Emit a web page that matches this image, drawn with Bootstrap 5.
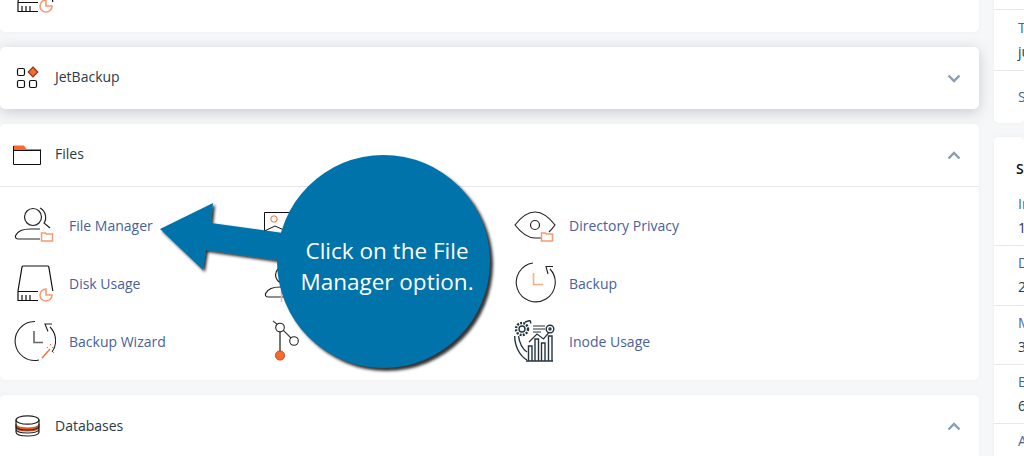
<!DOCTYPE html>
<html lang="en"><head><meta charset="utf-8">
<link href="https://cdn.jsdelivr.net/npm/bootstrap@5.3.0/dist/css/bootstrap.min.css" rel="stylesheet">
<style>
html,body{height:456px;overflow:hidden}
body{background:#f6f7f8;font-family:"Open Sans","Noto Sans",sans-serif;font-size:14px;color:#293a4a;position:relative}
.stage{display:flex;gap:15px;height:456px;overflow:hidden}
.maincol{width:979px;flex:none;display:flex;flex-direction:column;gap:15px;margin-top:-60px}
.sidecol{flex:1;display:flex;flex-direction:column;gap:14px;margin-top:-113px;min-width:0}
.panel{background:#fff;border-radius:5px;flex:none;box-shadow:0 0 4px rgba(60,70,90,.05)}
.panel.lifted{box-shadow:0 3px 14px rgba(60,70,90,.25)}
.ph{height:62px;display:flex;align-items:center;padding:0 18px 4px 15px;color:#293a4a}
.ph span{margin-left:14px;flex:1}
.ph svg.ico{width:26px;height:26px;flex:none;margin-top:2px}
.ph.bordered{height:63px;border-bottom:1px solid #e6e8f3}
.ph svg.fold{width:28px;height:20px;flex:none;margin:4px 0 0 -2px}
.ph.last{height:80px;padding-bottom:20px}
.ph.last svg.ico{margin-top:0}
.chev{width:14px;height:9px;flex:none;margin-top:4px}
.ph.last .chev{margin-top:2px}
.tools{display:grid;grid-template-columns:250px 250px 1fr;padding:9px 0 0 14px;height:193px;grid-auto-rows:58px;align-content:start}
.tool{display:flex;align-items:center;color:#4a5f9c;text-decoration:none;height:58px}
.tool svg{width:42px;height:42px;flex:none;margin-right:13px}
.top{height:92px}
.top svg{display:block;width:42px;height:42px;margin:33px 0 0 14px}
.srow{height:59.3px;border-bottom:1px solid #e8e8e8;padding:5px 0 0 24px;line-height:24px;white-space:nowrap;overflow:hidden}
.srow:last-child{border-bottom:0}
.srow.blank{height:123px;padding:0}
.srow.theme{height:61px;padding-top:6px}
.srow.srv{height:52px;border:0;padding-top:14px}
.srow.stt{height:50px;border:0;padding:20px 0 0 22px;font-weight:600;color:#111}
.lnk{color:#4a5f9c}
.callout{position:absolute;left:0;top:0;width:1024px;height:456px;pointer-events:none}
.callout svg{position:absolute;left:0;top:0}
.bubble{position:absolute;left:277px;top:155px;width:213px;height:213px;border-radius:50%;background:#0073aa;color:#fff;font-size:22.5px;line-height:31px;text-align:center;display:flex;align-items:center;justify-content:center;box-shadow:3px 3px 3px rgba(0,0,0,.8);padding:9px 0 0 7px}
</style></head><body>
<svg class="d-none"><symbol id="disk" viewBox="0 0 42 42"><path d="M4 29L8 5q.3-1 1.500-1h24q1 0 1.300 1l4 24M24 29.500H4v9h20M8 33v5M12 33v5M16 33v5" fill="none" stroke="#111" stroke-width="1.200"/><path d="M32 27a6 6 0 1 0 6 6h-6z" fill="none" stroke="#f79a72" stroke-width="1.600"/></symbol></svg>
<div class="stage">
<div class="maincol">
<div class="panel top"><svg viewBox="0 0 42 42"><use href="#disk"/></svg></div>
<div class="panel lifted ph"><svg class="ico" viewBox="0 0 26 26" fill="none" stroke="#111" stroke-width="1.200"><rect x="2.500" y="4.500" width="7" height="7" rx="1.500"/><rect x="2.500" y="16.500" width="7" height="7" rx="1.500"/><rect x="14.500" y="16.500" width="7" height="7" rx="1.500"/><path d="M18 3l4.800 5-4.800 5-4.800-5z" fill="#f96a2d" stroke="#8a3a18"/></svg><span>JetBackup</span><svg class="chev" viewBox="0 0 14 9" fill="none" stroke="#8a9db5" stroke-width="2.400"><path d="M1.500 1.500L7 7l5.500-5.500"/></svg></div>
<div class="panel">
<div class="ph bordered"><svg class="fold" viewBox="0 0 28 20" fill="none"><path d="M.500 5.500V.500h10.500l2.500 3.500h14v1.500z" fill="#f96a2d"/><path d="M.500 1v18.500h27V4.500M.500 5.500h27" stroke="#111"/></svg><span>Files</span><svg class="chev" viewBox="0 0 14 9" fill="none" stroke="#8a9db5" stroke-width="2.400"><path d="M1.500 7.500L7 2l5.500 5.500"/></svg></div>
<div class="tools">
<a class="tool"><svg viewBox="0 0 42 42" fill="none" stroke="#222" stroke-width="1.200"><circle cx="19" cy="13" r="8.500"/><path d="M26 4c6 3 7 11 4 15l6 5M26 35H4c-3 0-3-3-2-4 2-4 8-6 14-6h10"/><path d="M27.500 37v-8h4l1 1h6v7z" stroke="#f79a72" stroke-width="1.500"/></svg>File Manager</a>
<a class="tool"><svg viewBox="0 0 42 42" fill="none"><path d="M.500 27V8.500h34" stroke="#111"/><circle cx="10" cy="15" r="3.200" stroke="#f96a2d"/><path d="M.500 27L11 22l11 5" stroke="#111"/></svg></a>
<a class="tool"><svg viewBox="0 0 42 42" fill="none" stroke="#222" stroke-width="1.200"><path d="M27 34h-6C14 34 8 30 1 21 8 12 14 8 21 8s13 4 20 13c-2 3-4 5-6 7"/><circle cx="21" cy="21" r="4.500"/><path d="M27.500 37v-8h4l1 1h6v7z" stroke="#f79a72" stroke-width="1.500"/></svg>Directory Privacy</a>
<a class="tool"><svg viewBox="0 0 42 42"><use href="#disk"/></svg>Disk Usage</a>
<a class="tool"><svg viewBox="0 0 42 42" fill="none"><circle cx="20" cy="13" r="8.500" stroke="#222" stroke-width="1.200"/><path d="M26 35H4c-3 0-3-3-2-4 2-4 8-6 14-6h10" stroke="#222" stroke-width="1.200"/><path d="M17.500 28v12" stroke="#fbb596" stroke-width="1.500"/></svg></a>
<a class="tool"><svg viewBox="0 0 42 42" fill="none" stroke="#222" stroke-width="1.100"><path d="M19 1A19.500 19.500 0 1 0 36 7M39 4.500H32l2 7.500"/><path d="M19.500 11v11.500H29" stroke="#fbab88" stroke-width="1.600"/></svg>Backup</a>
<a class="tool"><svg viewBox="0 0 42 42" fill="none" stroke="#222" stroke-width="1.100"><path d="M21 1.500A19.500 19.500 0 1 0 25 40M38 4h-7l3 7.500M36 7a19.500 19.500 0 0 1 2 25"/><path d="M20 11v11.500h9" stroke="#666" stroke-width="1.600"/><path d="M28 38l8-9" stroke="#f96a2d" stroke-width="1.300"/><path d="M33 27l1 1M38 27l1 1M39 32l1 1M36 24l1 1" stroke="#f96a2d" stroke-width="1"/></svg>Backup Wizard</a>
<a class="tool"><svg viewBox="0 0 42 42" fill="none"><path d="M16 9v24" stroke="#666" stroke-width="1.800"/><path d="M19 10l8 8M9 1l5 4" stroke="#444" stroke-width="1.100"/><circle cx="16" cy="7.500" r="4.300" fill="#fff" stroke="#222" stroke-width="1.100"/><circle cx="30" cy="21" r="4.300" fill="#fff" stroke="#222" stroke-width="1.100"/><circle cx="16" cy="35.500" r="4.600" fill="#f96a2d" stroke="#c34a18"/></svg></a>
<a class="tool"><svg viewBox="0 0 42 42" fill="none" stroke="#25343f" stroke-width="1.400"><circle cx="8" cy="9" r="6" stroke-width="2.400" stroke-dasharray="2 1.200"/><circle cx="8" cy="9" r="3"/><path d="M.700 16c0 10 5 20 12.300 24M4.500 16c1 7 4 13 8.500 16M11 2l5-1.500 1 3"/><path d="M19 6h12M19 9h12M19 12h8" stroke-width="1.100"/><circle cx="36" cy="9" r="3.800"/><circle cx="36" cy="9" r="1"/><path d="M14.500 41V26h3.500v15zM21 41V19h3.500v22zM27.500 41V23h3.500v18zM34.500 41V16H38v25zM12 41h27"/><path d="M15 22l8-8 6.500 5 5-6" stroke-width="1.200"/></svg>Inode Usage</a>
</div></div>
<div class="panel ph last"><svg class="ico" viewBox="0 0 26 26" fill="none" stroke="#222" stroke-width="1.200"><path d="M1 12v3c0 2.500 5 4 11.500 4S24 17.500 24 15v-3c0 2.500-5 4-11.500 4S1 14.500 1 12z" fill="#f96a2d" stroke="#c34a18"/><ellipse cx="12.500" cy="8" rx="11.500" ry="4.200"/><path d="M1 8v12c0 2.500 5 4 11.500 4S24 22.500 24 20V8M1 14c0 2.500 5 4 11.500 4S24 16.500 24 14M1 17c0 2.500 5 4 11.500 4S24 19.500 24 17"/></svg><span>Databases</span><svg class="chev" viewBox="0 0 14 9" fill="none" stroke="#8a9db5" stroke-width="2.400"><path d="M1.500 7.500L7 2l5.500 5.500"/></svg></div>
</div>
<div class="sidecol">
<div class="panel">
<div class="srow blank"></div>
<div class="srow theme"><span class="lnk">Theme</span><br>jupiter</div>
<div class="srow srv lnk">Server</div>
</div>
<div class="panel">
<div class="srow stt">Statistics</div>
<div class="srow"><span class="lnk">Inodes</span><br>12</div>
<div class="srow"><span class="lnk">Disk</span><br>2</div>
<div class="srow"><span class="lnk">MySQL</span><br>3</div>
<div class="srow"><span class="lnk">Bandwidth</span><br>6</div>
<div class="srow"><span class="lnk">Addon</span></div>
</div>
</div>
</div>
<div class="callout">
<svg width="1024" height="456"><defs><filter id="ds" x="-20%" y="-20%" width="140%" height="140%"><feDropShadow dx="2" dy="2" stdDeviation="1.500" flood-color="#000" flood-opacity=".85"/></filter></defs><path d="M160 229L213 203L211 223L290 234L290 262L206 250L203 270Z" fill="#0073aa" filter="url(#ds)"/></svg>
<div class="bubble"><div>Click on the File<br>Manager option.</div></div>
</div>
</body></html>
